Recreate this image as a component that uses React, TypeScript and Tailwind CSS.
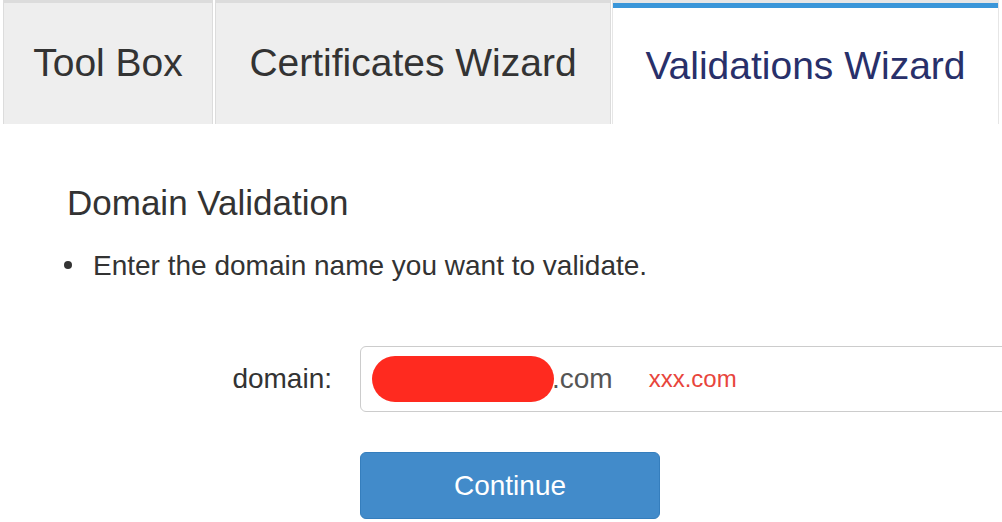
import React from "react";

export default function App() {
  const font = { fontFamily: '"Liberation Sans", Arial, Helvetica, sans-serif' };
  return (
    <div className="w-[1002px] h-[522px] bg-white overflow-hidden relative" style={font}>
      {/* Tabs */}
      <div className="flex h-[124px] pl-[3px] bg-white">
        <div className="w-[210px] shrink-0 h-[124px] bg-[#eeeeee] border-t-[3px] border-l border-r border-[#dcdcdc] flex items-center justify-center text-[39px] text-[#333333]">
          Tool Box
        </div>
        <div className="w-[396px] shrink-0 ml-[2px] h-[124px] bg-[#eeeeee] border-t-[3px] border-l border-r border-[#dcdcdc] flex items-center justify-center text-[39px] text-[#333333]">
          Certificates Wizard
        </div>
        <div className="w-[387px] shrink-0 ml-[1px] h-[124px] bg-white border-t-[3px] border-[#e6e6e6] border-l border-r">
          <div className="h-[5px] bg-[#3a96d9]" />
          <div className="h-[116px] flex items-center justify-center text-[39px] text-[#28306a]">
            Validations Wizard
          </div>
        </div>
      </div>

      {/* Content */}
      <div className="pt-[58px] pl-[67px]">
        <div className="text-[35px] leading-[42px] text-[#333333]">Domain Validation</div>
        <div className="mt-[25px] flex items-center leading-[34px] text-[28px] text-[#333333]">
          <span className="w-[8px] h-[8px] rounded-full bg-[#333333] ml-[-3px] mt-[-2px] shrink-0" />
          <span className="ml-[21px]">Enter the domain name you want to validate.</span>
        </div>
      </div>

      <div className="mt-[63px] flex items-center">
        <div className="w-[332px] shrink-0 text-right text-[28px] text-[#333333]">domain:</div>
        <div className="ml-[28px] w-[680px] shrink-0 h-[66px] border border-[#cccccc] rounded-[6px] flex items-center pl-[11px]">
          <span className="w-[182px] h-[46px] rounded-full bg-[#ff2a1f] shrink-0" />
          <span className="ml-[-2px] text-[28px] text-[#555555]">.com</span>
          <span className="ml-[36px] text-[24px] text-[#e8453c]">xxx.com</span>
        </div>
      </div>

      <div className="mt-[40px] pl-[360px]">
        <button className="w-[300px] h-[67px] bg-[#428bca] border border-[#357ebd] rounded-[6px] text-white text-[28px]">
          Continue
        </button>
      </div>
    </div>
  );
}
